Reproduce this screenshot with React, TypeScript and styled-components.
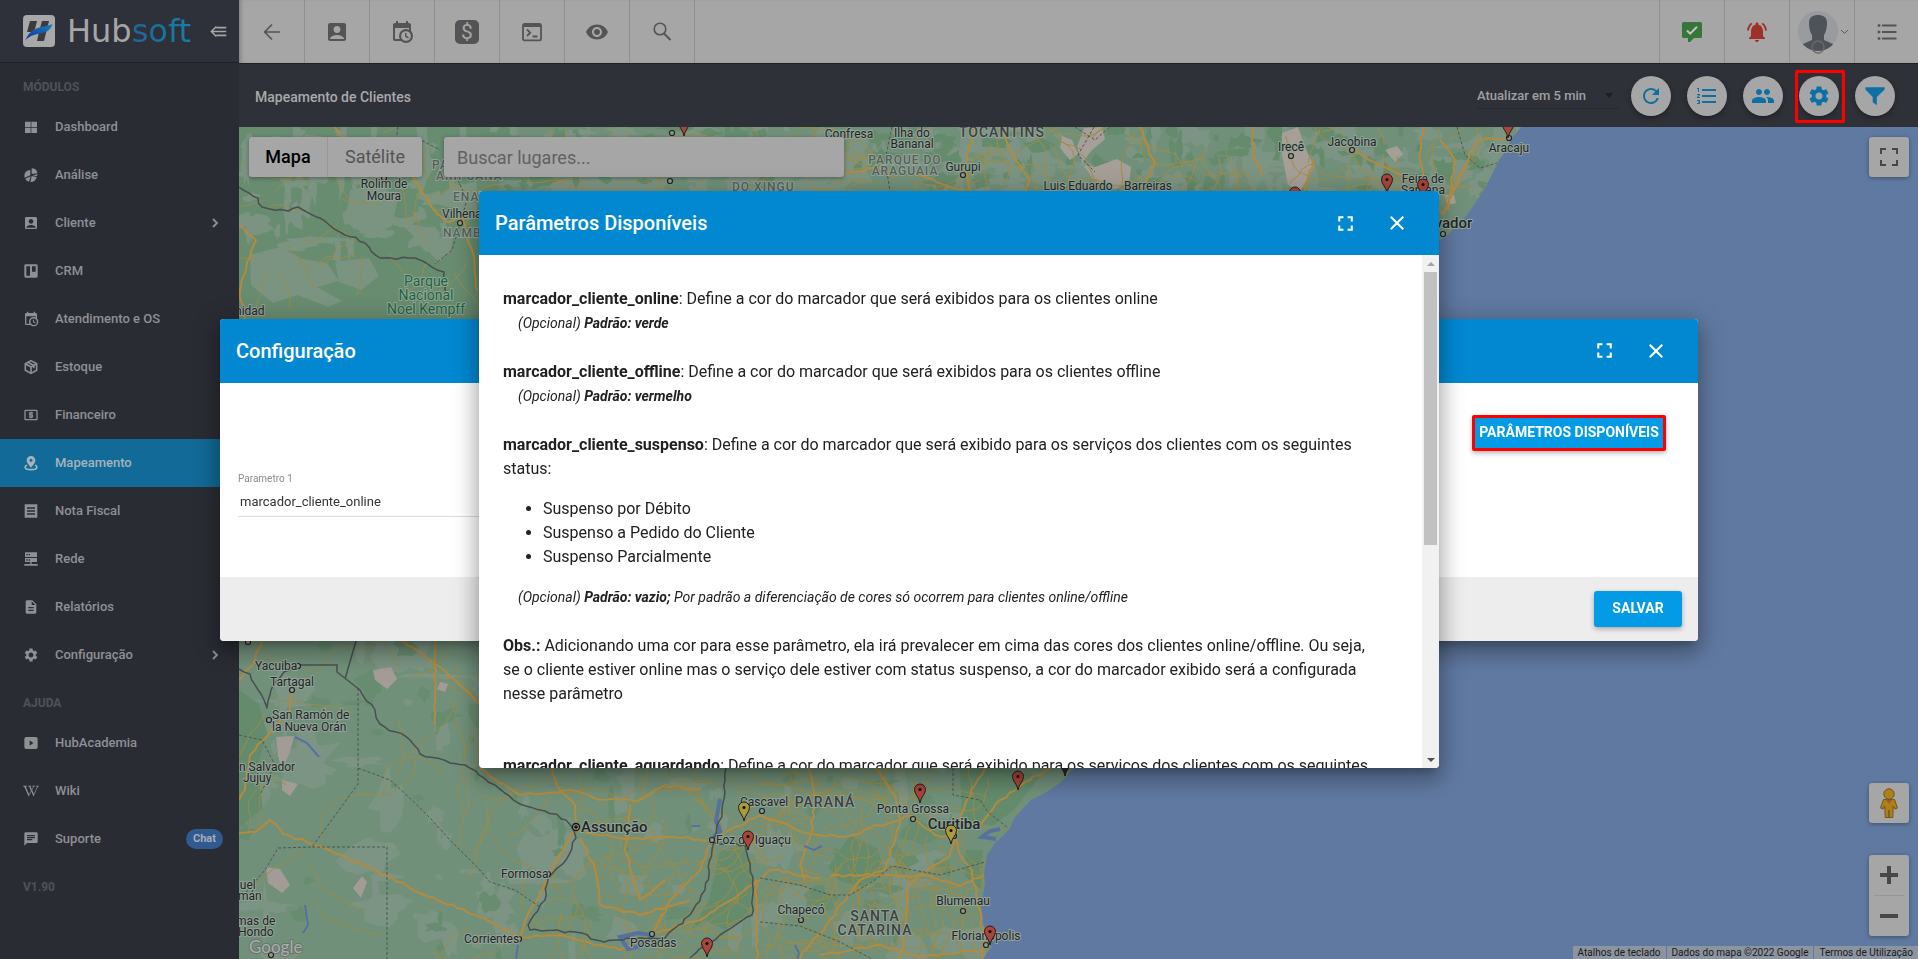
import React from "react";
import styled, { createGlobalStyle, css } from "styled-components";
import {
  MdAccountBox,
  MdChat,
  MdClose,
  MdDescription,
  MdFormatListNumbered,
  MdFullscreen,
  MdLocalAtm,
  MdNotificationsActive,
  MdPeople,
  MdRefresh,
  MdSettings,
  MdVisibility,
} from "react-icons/md";
import { FaWikipediaW } from "react-icons/fa";

const GlobalStyle = createGlobalStyle`
  * { box-sizing: border-box; }
  body { margin: 0; font-family: Roboto, "Liberation Sans", sans-serif; font-size: 13px; color: #212121; }
  button, input, select { font-family: inherit; margin: 0; }
  button { border: 0; padding: 0; cursor: pointer; }
  a { color: inherit; text-decoration: none; }
`;

/* ---------- icons ---------- */

const Svg = styled.svg<{ $size: number }>`
  width: ${(p) => p.$size}px;
  height: ${(p) => p.$size}px;
  display: block;
  flex: none;
`;

type IconProps = { size?: number };

const icon =
  (body: React.ReactNode) =>
  ({ size = 24 }: IconProps) => (
    <Svg $size={size} viewBox="0 0 24 24" fill="currentColor" aria-hidden="true">
      {body}
    </Svg>
  );

const stroke = { fill: "none", stroke: "currentColor" } as const;

const DashboardIcon = icon(<path d="M3 4h8.500v8H3zM12.500 4H21v8h-8.500zM3 13h8.500v8H3zM12.500 13H21v8h-8.500z" />);
const PieIcon = icon(
  <path d="M13 2v8.500l8.800-1.200A9 9 0 0 0 13 2zM11 4.500A8.700 8.700 0 0 0 2 13c0 1 .2 2 .6 3L11 12.300zM3.400 17.500A9 9 0 0 0 9 22l2.500-8zM13 13.500l-2 9A9.500 9.500 0 0 0 20.500 15zM14 12.300l7 1.500.8-3z" />
);
const TrelloIcon = icon(
  <path fillRule="evenodd" d="M4 2h16a2 2 0 0 1 2 2v16a2 2 0 0 1-2 2H4a2 2 0 0 1-2-2V4a2 2 0 0 1 2-2zM5 5v14h5.500V5zM13.500 5v8H19V5z" />
);
const CalendarIcon = icon(
  <path d="M15,13H16.500V15.820L18.940,17.230L18.190,18.530L15,16.690V13M19,8H5V19H9.670C9.240,18.090 9,17.070 9,16A7,7 0 0,1 16,9C17.070,9 18.090,9.240 19,9.670V8M5,21C3.890,21 3,20.100 3,19V5C3,3.890 3.890,3 5,3H6V1H8V3H16V1H18V3H19A2,2 0 0,1 21,5V11.100C22.240,12.360 23,14.090 23,16A7,7 0 0,1 16,23C14.090,23 12.360,22.240 11.100,21H5M16,11.150A4.850,4.850 0 0,0 11.150,16C11.150,18.680 13.320,20.850 16,20.850A4.850,4.850 0 0,0 20.850,16C20.850,13.320 18.680,11.150 16,11.150Z" />
);
const PackageIcon = icon(
  <g {...stroke} strokeWidth="2.400" strokeLinejoin="round">
    <path d="M12 2.500l8.500 4.700v9.600L12 21.500l-8.500-4.700V7.200z" />
    <path d="M3.500 7.200L12 12l8.500-4.800M12 12v9.500M7.500 4.800l8.700 5v4" />
  </g>
);
const PinRadiusIcon = icon(
  <g>
    <path fillRule="evenodd" d="M12 1.500a6.500 6.500 0 0 1 6.500 6.500c0 4.500-6.500 11-6.500 11S5.500 12.500 5.500 8A6.500 6.500 0 0 1 12 1.500zm0 4.200a2.300 2.300 0 1 0 0 4.600 2.300 2.300 0 0 0 0-4.600z" />
    <path {...stroke} strokeWidth="2.400" d="M6 15.500c-2 .8-2.800 1.700-2.800 2.700 0 2.200 4 3.800 8.800 3.800s8.800-1.600 8.800-3.800c0-1-.8-1.900-2.800-2.700" />
  </g>
);
const NoteIcon = icon(<path fillRule="evenodd" d="M2.500 2h19v20h-19zM6 6.500v2h12v-2zM6 11v2h12v-2zM6 15.500v2h12v-2z" />);
const ServerIcon = icon(
  <path fillRule="evenodd" d="M3 2h18v7H3zM5 4.500v2h2v-2zM8.500 4.500v2h2v-2zM3 10.500h18v6H3zM5 12.500v2h2v-2zM8.500 12.500v2h2v-2zM11 16.500h2v3h9v2.500H2v-2.500h9z" />
);
const VideoIcon = icon(
  <path fillRule="evenodd" d="M5 3h14a3 3 0 0 1 3 3v12a3 3 0 0 1-3 3H5a3 3 0 0 1-3-3V6a3 3 0 0 1 3-3zM10 8v8l5.500-4z" />
);
const ChevronIcon = icon(<path {...stroke} strokeWidth="2.800" d="M9 6l6 6-6 6" />);
const ChevronDownIcon = icon(<path {...stroke} strokeWidth="2.600" d="M3 8l9 9 9-9" />);
const BackIcon = icon(<path {...stroke} strokeWidth="1.700" d="M20 12H5M12 4.500L4.700 12l7.300 7.500" />);
const ConsoleIcon = icon(
  <g {...stroke} strokeWidth="1.800">
    <rect x="3" y="3.900" width="18" height="16.500" rx="1.500" />
    <path d="M3 5.500h18" strokeWidth="3" />
    <path d="M7 9.500l3.200 3.200L7 16M12.500 16.500h5" />
  </g>
);
const SearchIcon = icon(
  <g {...stroke} strokeWidth="1.600">
    <circle cx="10" cy="9" r="5.800" />
    <path d="M14 13.500l6.500 6.500" strokeWidth="2" />
  </g>
);
const CollapseIcon = icon(
  <g {...stroke} strokeWidth="2.200">
    <path d="M9 5l-7 7 7 7M2 12h21M9 6.500h14M9 17.500h14" />
  </g>
);
const CommentCheckIcon = icon(
  <g>
    <path d="M3.500 2h17A1.500 1.500 0 0 1 22 3.500v13a1.500 1.500 0 0 1-1.500 1.500H14l-4 4h-2v-4H3.500A1.500 1.500 0 0 1 2 16.500v-13A1.500 1.500 0 0 1 3.500 2z" />
    <path d="M7 10.500l3.200 3.200 6.800-7" fill="none" stroke="#c0c8c0" strokeWidth="2" />
  </g>
);
const ListIcon = icon(
  <g {...stroke} strokeWidth="1.800">
    <path d="M7 5.500h14.500M7 12h14.500M7 18.500h14.500" />
    <path d="M2.700 5.500h2.600M2.700 12h2.600M2.700 18.500h2.600" strokeWidth="2.400" />
  </g>
);
const FunnelIcon = icon(<path d="M1.500 2.500h21v2.300L14 13v9l-4.500-3.200V13L1.500 4.800z" />);

const DollarBadge = styled.span`
  width: 24px;
  height: 24px;
  border-radius: 5px;
  background: #545454;
  color: #a6a6a6;
  font-size: 21px;
  line-height: 24px;
  text-align: center;
`;

/* ---------- shell ---------- */

const Shell = styled.div`
  display: grid;
  grid-template-columns: 239px minmax(0, 1fr);
  min-height: 100vh;
`;

const Sidebar = styled.nav`
  display: flex;
  flex-direction: column;
  background: #2a2c34;
  color: #8f9094;
`;

const Brand = styled.div`
  height: 63px;
  display: flex;
  align-items: center;
  padding: 0 12px 0 23px;
  background: #2e3139;
  border-bottom: 1px solid #1f2127;
`;

const Wordmark = styled.span`
  flex: 1;
  margin-left: 12px;
  font-family: "DejaVu Sans", sans-serif;
  font-size: 32px;
  line-height: 40px;
  color: #a6a6a6;
`;

const WordmarkAccent = styled.span`
  color: transparent;
  background: linear-gradient(90deg, #1f6797, #157fa8);
  background-clip: text;
  -webkit-background-clip: text;
`;

const PlainButton = styled.button`
  background: none;
  color: #a6a6a6;
`;

const GroupTitle = styled.div`
  height: 40px;
  padding: 8px 23px 0;
  line-height: 32px;
  font-size: 12px;
  font-weight: 700;
  color: #505258;
`;

const NavLink = styled.a<{ $active?: boolean }>`
  display: flex;
  align-items: center;
  height: 48px;
  padding: 0 16px 0 23px;
  font-size: 13px;
  font-weight: 500;
  ${(p) => p.$active && css`background: #116a97; color: #a4b4bd;`}
`;

const NavLabel = styled.span`
  flex: 1;
  margin-left: 16px;
  padding-bottom: 2px;
`;

const ChatBadge = styled.span`
  width: 37px;
  border-radius: 10px;
  background: #305b91;
  color: #a6adb6;
  font-size: 11px;
  font-weight: 700;
  line-height: 20px;
  text-align: center;
`;

const Main = styled.div`
  display: flex;
  flex-direction: column;
  min-width: 0;
`;

const TopBar = styled.header`
  display: flex;
  height: 63px;
  padding-left: 1px;
  background: #a6a6a6;
  color: #545454;
  box-shadow: inset 4px 0 5px -3px rgba(0, 0, 0, 0.3);
`;

const TopButton = styled.button<{ $tone?: string; $side?: "left" }>`
  display: flex;
  align-items: center;
  justify-content: center;
  width: 65px;
  background: none;
  color: ${(p) => p.$tone ?? "#545454"};
  ${(p) => (p.$side === "left" ? "border-left: 1px solid #8f8f8f;" : "border-right: 1px solid #8f8f8f;")}
  &:last-child { width: 64px; }
`;

const Spacer = styled.div`
  flex: 1;
`;

const PageBar = styled.div`
  display: flex;
  align-items: center;
  height: 64px;
  padding: 0 23px 0 16px;
  background: #2f3139;
  border-top: 1px solid #202227;
`;

const PageTitle = styled.h1`
  flex: 1;
  margin: 2px 0 0;
  font-size: 14px;
  line-height: 20px;
  font-weight: 500;
  color: #a9a9ab;
`;

const IntervalField = styled.label`
  display: flex;
  align-items: center;
  width: 146px;
  margin-right: 10px;
  border-bottom: 1px solid #292b31;
  color: #1e1f24;
`;

const IntervalSelect = styled.select`
  flex: 1;
  appearance: none;
  border: 0;
  padding: 0 2px;
  height: 26px;
  background: transparent;
  color: #a0a0a2;
  font-size: 13px;
  font-weight: 500;
`;

const Caret = styled.span`
  margin-right: 8px;
  border: 4px solid transparent;
  border-top: 5px solid currentColor;
  border-bottom: 0;
`;

const RoundActions = styled.div`
  display: flex;
  gap: 16px;
`;

const RoundButton = styled.button<{ $marked?: boolean }>`
  position: relative;
  display: flex;
  align-items: center;
  justify-content: center;
  width: 40px;
  height: 40px;
  border-radius: 50%;
  background: #a6a6a6;
  color: #0d70a5;
  box-shadow: 0 2px 5px rgba(0, 0, 0, 0.35);
  ${(p) =>
    p.$marked &&
    css`
      &::after {
        content: "";
        position: absolute;
        inset: -6px -6px -7px -4px;
        border: 3px solid #ff0000;
        border-radius: 2px;
      }
    `}
`;

/* ---------- map ---------- */

const MapArea = styled.section`
  position: relative;
  flex: 1;
  min-height: 400px;
  overflow: hidden;
  background: #6079a1;
`;

const MapSvg = styled.svg`
  position: absolute;
  inset: 0;
  width: 100%;
  height: 100%;
  display: block;
  font-family: Roboto, "Liberation Sans", sans-serif;
`;

const MapTop = styled.div`
  position: absolute;
  top: 10px;
  left: 10px;
  right: 9px;
  display: flex;
`;

const mapPanel = css`
  background: #a6a6a6;
  border-radius: 3px;
  box-shadow: 0 1px 4px rgba(0, 0, 0, 0.35);
`;

const MapTypes = styled.div`
  ${mapPanel}
  display: flex;
  height: 40px;
  margin-right: 22px;
`;

const MapTypeButton = styled.button<{ $on?: boolean }>`
  background: none;
  width: ${(p) => (p.$on ? 78 : 95)}px;
  padding-bottom: 2px;
  font-size: 18px;
  font-weight: ${(p) => (p.$on ? 500 : 400)};
  color: ${(p) => (p.$on ? "#000" : "#545454")};
  & + & { border-left: 1px solid #979797; }
`;

const SearchBox = styled.input`
  ${mapPanel}
  width: 400px;
  height: 40px;
  border: 0;
  padding: 0 13px;
  font-size: 18px;
  &::placeholder { color: #616161; opacity: 1; }
`;

const MapButton = styled.button`
  ${mapPanel}
  width: 40px;
  height: 40px;
  display: flex;
  align-items: center;
  justify-content: center;
  color: #474747;
`;

const MapCorner = styled.div`
  position: absolute;
  right: 9px;
  bottom: 23px;
  display: flex;
  flex-direction: column;
  gap: 32px;
`;

const ZoomGroup = styled.div`
  ${mapPanel}
  display: flex;
  flex-direction: column;
  align-items: center;
  color: #474747;
`;

const ZoomButton = styled.button`
  display: flex;
  align-items: center;
  justify-content: center;
  width: 30px;
  height: 40px;
  background: none;
  color: inherit;
  & + & { border-top: 1px solid #979797; height: 41px; }
`;

const Attribution = styled.div`
  position: absolute;
  right: 0;
  bottom: 0;
  display: flex;
  gap: 1px;
  font-size: 10px;
  line-height: 13px;
  color: #1a1a1a;
`;

const AttributionLink = styled.a`
  padding: 0 5px;
  background: rgba(160, 160, 160, 0.7);
`;

/* Seeded generator: the terrain keeps the same texture on every load. */
const makeRandom = (seed: number) => () => {
  seed = (seed * 1664525 + 1013904223) % 4294967296;
  return seed / 4294967296;
};

const blobs = (seed: number, count: number, x0: number, y0: number, w: number, h: number, max: number) => {
  const r = makeRandom(seed);
  let d = "";
  for (let i = 0; i < count; i++) {
    const cx = x0 + r() * w;
    const cy = y0 + r() * h;
    const rx = 3 + r() * r() * max;
    const ry = 3 + r() * r() * max * 0.8;
    const pts: string[] = [];
    for (let k = 0; k < 13; k++) {
      const a = (k / 13) * Math.PI * 2;
      const s = 0.45 + r() * 0.8;
      pts.push(`${(cx + Math.cos(a) * rx * s).toFixed(1)} ${(cy + Math.sin(a) * ry * s).toFixed(1)}`);
    }
    d += `M${pts.join("L")}Z`;
  }
  return d;
};

const tracks = (seed: number, count: number, x0: number, y0: number, w: number, h: number, steps: number) => {
  const r = makeRandom(seed);
  let d = "";
  for (let i = 0; i < count; i++) {
    let x = x0 + r() * w;
    let y = y0 + r() * h;
    let a = r() * Math.PI * 2;
    d += `M${x.toFixed(1)} ${y.toFixed(1)}`;
    for (let k = 0; k < steps; k++) {
      a += (r() - 0.5) * 1.1;
      x += Math.cos(a) * 8;
      y += Math.sin(a) * 8;
      d += `L${x.toFixed(1)} ${y.toFixed(1)}`;
    }
  }
  return d;
};

const wiggle = (seed: number, points: number[][], amount: number) => {
  const r = makeRandom(seed);
  let d = `M${points[0].join(" ")}`;
  for (let i = 1; i < points.length; i++) {
    const [ax, ay] = points[i - 1];
    const [bx, by] = points[i];
    const n = Math.max(1, Math.round(Math.hypot(bx - ax, by - ay) / 6));
    for (let k = 1; k <= n; k++) {
      const j = k === n ? 0 : amount;
      d += `L${(ax + ((bx - ax) * k) / n + (r() - 0.5) * j).toFixed(1)} ${(ay + ((by - ay) * k) / n + (r() - 0.5) * j).toFixed(1)}`;
    }
  }
  return d;
};

const LAND =
  "M239 127H1521L1512 138 1506 150 1499 160 1492 174 1484 190 1474 205 1466 216 1455 227 1446 237 1439 240 1400 400 1240 660 1100 745 1074 768 1060 783 1045 793 1031 800 1015 817 1010 828 1003 836 996 842 987 855 984 873 985 883 981 907 984 927 986 940 992 947 987 953 983 959H239Z";

const FRONTIERS = [
  [[239, 187], [258, 198], [262, 207], [288, 211], [298, 207], [320, 218], [340, 232], [365, 243], [380, 258], [415, 258], [444, 272], [447, 300]],
  [[239, 669], [250, 674], [264, 700], [267, 708], [271, 690], [284, 672], [298, 665]],
  [[360, 690], [375, 710], [380, 724], [410, 740], [420, 754], [450, 763], [465, 765], [495, 785], [520, 804], [545, 811], [566, 820], [576, 838], [566, 860], [548, 878], [545, 900], [528, 925], [530, 930], [575, 932], [604, 942], [640, 938], [665, 938], [690, 915], [705, 890], [712, 850], [722, 810], [726, 768]],
  [[712, 842], [745, 845], [753, 877], [752, 915], [720, 935], [690, 958]],
];

const HIGHWAYS = [
  [[334, 127], [345, 140], [395, 150], [412, 175], [430, 205], [447, 222], [462, 218], [472, 250], [477, 290]],
  [[239, 225], [256, 240], [247, 262], [240, 290], [245, 319]],
  [[403, 641], [430, 660], [455, 680], [475, 700], [500, 715]],
  [[435, 641], [435, 725]],
  [[239, 680], [255, 660], [262, 641]],
  [[292, 690], [290, 710], [268, 735], [250, 755], [245, 790], [239, 800]],
  [[239, 833], [255, 832], [270, 820], [283, 834], [320, 846], [370, 868], [430, 897], [480, 917], [519, 938]],
  [[519, 938], [530, 910], [550, 875], [565, 845], [576, 830]],
  [[576, 830], [575, 805], [560, 790], [552, 768]],
  [[576, 830], [620, 838], [680, 838], [712, 840], [760, 815], [810, 834], [850, 836], [870, 828], [900, 820], [913, 815]],
  [[519, 938], [560, 935], [620, 950], [652, 934], [700, 920], [745, 890], [770, 870], [820, 878]],
  [[652, 934], [670, 900], [700, 870], [710, 845]],
  [[480, 768], [520, 795], [570, 790], [600, 800], [640, 800], [665, 785], [700, 790]],
  [[580, 838], [595, 870], [600, 905], [640, 915], [690, 900]],
  [[630, 805], [625, 850], [640, 900], [665, 880]],
  [[808, 768], [815, 800], [811, 834], [800, 865], [805, 880]],
  [[875, 768], [895, 795], [900, 820], [886, 868], [860, 880], [830, 920], [800, 959]],
  [[913, 819], [935, 835], [954, 837], [960, 855], [972, 870], [978, 900], [984, 940], [983, 959]],
  [[954, 837], [965, 805], [975, 785], [985, 768]],
  [[954, 837], [950, 856], [925, 872], [908, 885], [905, 930], [900, 959]],
  [[830, 876], [880, 875], [930, 876], [960, 886], [985, 875]],
  [[820, 955], [880, 945], [920, 957], [984, 950]],
  [[976, 830], [1000, 800], [1030, 780], [1050, 768]],
  [[756, 880], [757, 959]],
  [[845, 173], [880, 168], [920, 175], [965, 191]],
  [[975, 127], [965, 165], [970, 191]],
  [[1000, 127], [1010, 150], [1030, 180], [1025, 191]],
  [[1140, 127], [1155, 165], [1140, 191]],
  [[1252, 127], [1255, 160], [1262, 175]],
  [[1313, 160], [1305, 191]],
  [[1352, 150], [1380, 165], [1420, 185], [1443, 215]],
  [[1423, 127], [1420, 160], [1425, 190]],
  [[1509, 138], [1478, 140], [1465, 165], [1452, 195], [1443, 215]],
  [[1440, 140], [1455, 160], [1448, 210]],
];

const TRAILS = [
  "M398 127L396 141H423L440 150",
  "M458 180L467 200L452 250L435 264",
  "M358 688V784L312 847L278 848L265 870L239 900",
  "M312 847H387V959",
  "M358 768L390 780L412 800L430 818L450 840L480 870L490 882L515 890L540 907",
  "M953 768V795L980 800L988 812L1008 828",
  "M760 878L800 885L830 895L850 895L875 880L892 866L940 875L985 862",
  "M760 922L800 926L840 942L872 959",
  "M1075 127L1095 140L1110 127M1094 127L1078 155L1095 172",
  "M892 127L885 160L890 191",
  "M1457 127L1465 155L1480 168L1497 163",
  "M239 735L262 740L275 765L260 795",
];

type Label = [string, number, number, ("start" | "middle")?, ("city" | "capital" | "state" | "region" | "park")?];

const LABELS: Label[] = [
  ["Rolim de", 384, 188, "middle"],
  ["Moura", 384, 200, "middle"],
  ["PA", 432, 169, "start", "region"],
  ["ARIPUANA", 436, 180, "start", "region"],
  ["ENAW", 453, 201, "start", "region"],
  ["Vilhena", 442, 218, "start"],
  ["NAMBI", 443, 237, "start", "region"],
  ["Parque", 426, 286, "middle", "park"],
  ["Nacional", 426, 300, "middle", "park"],
  ["Noel Kempff", 426, 314, "middle", "park"],
  ["nidad", 235, 315, "start"],
  ["DO XINGU", 732, 191, "start", "region"],
  ["Confresa", 849, 138, "middle"],
  ["Ilha do", 912, 137, "middle"],
  ["Bananal", 912, 148, "middle"],
  ["TOCANTINS", 1002, 137, "middle", "state"],
  ["PARQUE DO", 905, 164, "middle", "region"],
  ["ARAGUAIA", 905, 175, "middle", "region"],
  ["Gurupi", 963, 171, "middle"],
  ["Luis Eduardo", 1078, 190, "middle"],
  ["Barreiras", 1148, 190, "middle"],
  ["Irecê", 1291, 151, "middle"],
  ["Jacobina", 1352, 146, "middle"],
  ["Feira de", 1423, 183, "middle"],
  ["Santana", 1423, 194, "middle"],
  ["Aracaju", 1509, 152, "middle"],
  ["Salvador", 1443, 228, "middle", "capital"],
  ["Yacuiba", 255, 670, "start"],
  ["Tartagal", 292, 686, "middle"],
  ["San Ramón de", 272, 719, "start"],
  ["la Nueva Orán", 272, 731, "start"],
  ["n Salvador", 239, 771, "start"],
  ["Jujuy", 243, 782, "start"],
  ["Assunção", 581, 832, "start", "capital"],
  ["Formosa", 501, 878, "start"],
  ["Corrientes", 464, 943, "start"],
  ["Posadas", 630, 947, "start"],
  ["Foz do Iguaçu", 716, 844, "start"],
  ["Cascavel", 740, 806, "start"],
  ["quel", 233, 889, "start"],
  ["mán", 238, 900, "start"],
  ["mas de", 236, 925, "start"],
  ["Hondo", 238, 936, "start"],
  ["PARANÁ", 825, 807, "middle", "state"],
  ["Ponta Grossa", 913, 813, "middle"],
  ["Curitiba", 954, 829, "middle", "capital"],
  ["Blumenau", 963, 905, "middle"],
  ["Chapecó", 801, 914, "middle"],
  ["SANTA", 875, 921, "middle", "state"],
  ["CATARINA", 875, 935, "middle", "state"],
  ["Florianópolis", 986, 940, "middle"],
];

const MapLabel = styled.text<{ $kind: string }>`
  paint-order: stroke;
  stroke: #93a598;
  stroke-width: 2px;
  stroke-linejoin: round;
  fill: #222426;
  font-size: 12px;
  ${(p) => p.$kind === "capital" && "font-size: 15px; font-weight: 500;"}
  ${(p) => p.$kind === "state" && "font-size: 14px; letter-spacing: 1px; font-weight: 500; fill: #3d4042;"}
  ${(p) => p.$kind === "region" && "font-size: 12px; letter-spacing: 1px; font-weight: 500; fill: #55605a;"}
  ${(p) => p.$kind === "park" && "font-size: 14px; fill: #1e6340;"}
`;

const TOWNS = [
  [460, 223], [963, 175], [1291, 156], [1352, 150], [1509, 138], [1443, 234], [298, 666], [292, 690], [269, 720],
  [548, 874], [519, 939], [652, 934], [712, 840], [762, 811], [913, 819], [954, 836], [963, 911], [801, 920],
  [986, 945], [248, 642], [271, 955], [672, 133], [670, 181], [384, 178],
];

const PINS: [number, number, string][] = [
  [920, 803, "#a8463c"], [1018, 790, "#a8463c"], [951, 844, "#a89c3c"], [990, 945, "#a8463c"],
  [744, 821, "#a89c3c"], [748, 850, "#a8463c"], [707, 957, "#a8463c"], [1387, 193, "#a8463c"],
  [1423, 198, "#a8463c"], [1295, 206, "#a8463c"], [1508, 138, "#a8463c"], [684, 136, "#a8463c"],
  [1065, 776, "#2c2c2c"],
];

const line = (pts: number[][]) => wiggle(pts[0][0] + pts[0][1], pts, 3);

const MapCanvas = () => (
  <MapSvg viewBox="239 127 1679 832" preserveAspectRatio="xMinYMin slice" role="img" aria-label="Mapa de clientes">
    <clipPath id="land">
      <path d={LAND} />
    </clipPath>
    <path d={LAND} fill="#71907a" />
    <g clipPath="url(#land)">
      <rect x="239" y="127" width="260" height="200" fill="#688c70" />
      <path d={blobs(7, 60, 239, 127, 250, 130, 42)} fill="#7b9482" />
      <path d="M250 255l30-8 22 12 25 4 12 18-22 6 25 14-14 6-30-12-25 8-22-18zM335 262l34-4 10 18-18 14-22-8zM350 190l28-6 20 14-6 28-22 12-24-16z" fill="#7b9482" />
      <path d={blobs(21, 240, 480, 127, 1050, 70, 34)} fill="#7c9483" />
      <path d={blobs(34, 130, 480, 127, 1050, 70, 20)} fill="#658b6d" />
      <path d={blobs(51, 130, 239, 641, 760, 318, 44)} fill="#7c9483" />
      <path d={blobs(66, 90, 239, 641, 760, 318, 26)} fill="#678c6f" />
      <path d="M239 690l20 14 8 30-10 34 6 40-24 20zM720 850l24-4 9 30-4 38-24 16-20-10-14 10 18-30zM850 835l28 14 6 24-22 14-22-6-12-14zM960 768l40 0 40 8-26 34-22 16-30-8zM965 850l18 0-2 40-16-14z" fill="#648b6c" />
      <path d="M373 670l18-3 6 12-10 10-12-9zM440 682l8 2-3 8-8-3zM276 737l18-1-4 16-8 18-4-14zM282 780l16 4-8 12-8-6zM266 867l14 2 10 16-8 8-14-10zM362 876l5 6-6 16-8-10z" fill="#a39b96" />
      <path d="M1084 128l18-1 3 12-14 12-10 14 14 2 22-8 14 8-2 16-14 6-20-8-12-16-6-18zM1062 136l10 4 6 14-8 6-10-12zM1282 133l16-6 8 22 8 18-14 24-12-6-6-30zM1385 150l12-4 6 8-8 8zM820 199l8-2 2 8-8 4zM1444 195l10 0 2 8-8 2z" fill="#a59f98" />
      <path d={tracks(90, 30, 239, 127, 250, 190, 5)} fill="none" stroke="#978c4c" strokeWidth="1" />
      <path d={tracks(91, 110, 480, 127, 1040, 70, 9)} fill="none" stroke="#a08c46" strokeWidth="1" />
      <path d={tracks(92, 34, 239, 641, 300, 318, 10)} fill="none" stroke="#978c4c" strokeWidth="1" />
      <path d={tracks(93, 170, 560, 768, 430, 190, 10)} fill="none" stroke="#9c8b46" strokeWidth="1" />
      {HIGHWAYS.map((pts, i) => (
        <path key={i} d={line(pts)} fill="none" stroke="#b28b3f" strokeWidth="2" strokeLinejoin="round" />
      ))}
      <path d="M295 737l12 6 12 14M305 905l3 20-5 8M518 945l-2 14M700 826l-8 0M804 846l10 4 8-4M795 945l4 8-2 8" fill="none" stroke="#56719f" strokeWidth="2" />
      <path d="M720 799l-4 22 4 10-8 8M620 937l18-4 14 2-8 10-16 4zM1000 829l-10 2-8 6 14 2" fill="none" stroke="#56719f" strokeWidth="4" />
      {TRAILS.map((d) => (
        <path key={d} d={d} fill="none" stroke="#4d5751" strokeWidth="1" strokeDasharray="3 2" />
      ))}
      {FRONTIERS.map((pts, i) => (
        <path key={i} d={wiggle(i + 3, pts, 3)} fill="none" stroke="#484f4f" strokeWidth="1.500" strokeLinejoin="round" />
      ))}
      <path d="M298 665H337V672L360 690M356 641L345 679" fill="none" stroke="#484f4f" strokeWidth="1.500" />
    </g>
    {TOWNS.map(([x, y]) => (
      <circle key={`${x}-${y}`} cx={x} cy={y} r="2.500" fill="#8f9a93" stroke="#222" strokeWidth="1.200" />
    ))}
    <circle cx="576" cy="827" r="3.500" fill="#8f9a93" stroke="#111" strokeWidth="1.300" />
    <circle cx="576" cy="827" r="1.800" fill="#111" />
    {LABELS.map(([text, x, y, anchor = "start", kind = "city"]) => (
      <MapLabel key={`${text}${x}${y}`} x={x} y={y} textAnchor={anchor} $kind={kind}>
        {text}
      </MapLabel>
    ))}
    {PINS.map(([x, y, color]) => (
      <g key={`${x}-${y}`} transform={`translate(${x} ${y})`}>
        <path d="M0 0C-.6-6-5.500-8.500-5.500-13.500A5.500 5.500 0 0 1 5.500-13.500C5.500-8.500 .6-6 0 0Z" fill={color} stroke="#2b1a18" strokeWidth="1" />
        <circle cx="0" cy="-13.500" r="1.600" fill="#1a0c0a" />
      </g>
    ))}
    <text x="249" y="953" fontFamily="Lato, sans-serif" fontSize="17" fill="#a9aeab" stroke="#69746d" strokeWidth="2" paintOrder="stroke">
      Google
    </text>
  </MapSvg>
);

const CornersIcon = ({ size = 18 }: IconProps) => (
  <Svg $size={size} viewBox="0 0 18 18" fill="currentColor" aria-hidden="true">
    <path d="M0 0h6v2H2v4H0zM12 0h6v6h-2V2h-4zM0 12h2v4h4v2H0zM16 12h2v6h-6v-2h4z" />
  </Svg>
);

const Pegman = () => (
  <Svg $size={30} viewBox="0 0 30 30" aria-hidden="true">
    <path d="M9.500 11.500h11l3 8.500-2.500 1-1.800-3-.4 11.500h-7.600L10.800 18l-1.800 3-2.500-1z" fill="#ae8017" stroke="#6e5622" strokeWidth="1" />
    <path d="M11.500 11.500h7l-3.500 4.500z" fill="#a5592a" />
    <circle cx="15" cy="6" r="5.200" fill="#ae8017" stroke="#6e5622" strokeWidth="1" />
    <path d="M15 22v7.500" stroke="#6e5622" strokeWidth="1.500" />
  </Svg>
);

/* ---------- dialogs ---------- */

const Layer = styled.div`
  position: fixed;
  inset: 0;
  display: flex;
  align-items: center;
  justify-content: center;
`;

const Dialog = styled.section<{ $width: string }>`
  display: flex;
  flex-direction: column;
  width: ${(p) => p.$width};
  max-width: 100%;
  max-height: min(577px, 90vh);
  border-radius: 4px;
  overflow: hidden;
  background: #fff;
  box-shadow: 0 7px 8px -4px rgba(0, 0, 0, 0.2), 0 13px 19px 2px rgba(0, 0, 0, 0.14), 0 5px 24px 4px rgba(0, 0, 0, 0.22);
`;

const DialogHeader = styled.header`
  flex: none;
  display: flex;
  align-items: center;
  height: 64px;
  padding: 0 16px;
  background: #0288d1;
  color: #fff;
`;

const DialogTitle = styled.h2`
  flex: 1;
  margin: 0;
  font-size: 20px;
  font-weight: 500;
`;

const DialogIconButton = styled.button`
  display: flex;
  align-items: center;
  justify-content: center;
  width: 40px;
  height: 40px;
  margin: 0 6px;
  background: none;
  color: #fff;
`;

const ConfigBody = styled.div`
  display: grid;
  grid-template-columns: minmax(0, 1fr) auto;
  column-gap: 48px;
  align-items: start;
  height: 194px;
  padding: 32px 32px 0 18px;
`;

const Field = styled.label`
  display: flex;
  flex-direction: column;
  padding-top: 56px;
  color: #8c8c8c;
  font-size: 10px;
  line-height: 16px;
`;

const FieldInput = styled.input`
  height: 30px;
  border: 0;
  border-bottom: 1px solid #dcdcdc;
  padding: 0 2px;
  background: none;
  font-size: 13px;
  color: #333;
`;

const RaisedButton = styled.button`
  height: 36px;
  width: 88px;
  padding-bottom: 2px;
  border-radius: 3px;
  background: #039be5;
  color: #fff;
  font-size: 14px;
  font-weight: 700;
  box-shadow: 0 2px 5px rgba(0, 0, 0, 0.3);
`;

const MarkedButton = styled(RaisedButton)`
  width: 194px;
  border: 3px solid #ff0000;
  border-radius: 2px;
  white-space: nowrap;
`;

const DialogFooter = styled.footer`
  display: flex;
  align-items: center;
  justify-content: flex-end;
  height: 64px;
  padding: 0 16px;
  background: #ededed;
`;

const ScrollRegion = styled.div`
  display: flex;
  flex: 1;
  min-height: 0;
`;

const Doc = styled.div`
  flex: 1;
  overflow: hidden;
  padding: 32px 44px 0 24px;
  font-size: 16px;
  line-height: 24px;
  p { margin: 0; }
  b { font-weight: 700; }
  ul { margin: 16px 0; padding-left: 40px; }
`;

const Entry = styled.div`
  margin-bottom: 24px;
`;

const Hint = styled.p`
  padding-left: 15px;
  font-size: 14px;
  line-height: 25px;
  font-style: italic;
`;

const LaterEntry = styled(Entry)`
  margin-top: 48px;
`;

const ScrollBar = styled.div`
  flex: none;
  display: flex;
  flex-direction: column;
  align-items: center;
  width: 17px;
  background: #f1f1f1;
`;

const ScrollArrow = styled.span<{ $down?: boolean }>`
  display: flex;
  align-items: center;
  justify-content: center;
  height: 17px;
  color: ${(p) => (p.$down ? "#505050" : "#a3a3a3")};
  &::after {
    content: "";
    border: 4px solid transparent;
    ${(p) => (p.$down ? "border-top-color: currentColor; border-bottom: 0;" : "border-bottom-color: currentColor; border-top: 0;")}
  }
`;

const ScrollTrack = styled.div`
  flex: 1;
`;

const ScrollThumb = styled.div`
  width: 13px;
  height: 57%;
  background: #c1c1c1;
`;

const DialogTop = ({ id, title }: { id: string; title: string }) => (
  <DialogHeader>
    <DialogTitle id={id}>{title}</DialogTitle>
    <DialogIconButton type="button" aria-label="Tela cheia">
      <MdFullscreen size={25} />
    </DialogIconButton>
    <DialogIconButton type="button" aria-label="Fechar">
      <MdClose size={24} />
    </DialogIconButton>
  </DialogHeader>
);

/* ---------- data ---------- */

type Item = { label: string; icon: React.ReactNode; active?: boolean; more?: boolean; badge?: string };

const MODULES: Item[] = [
  { label: "Dashboard", icon: <DashboardIcon size={16} /> },
  { label: "Análise", icon: <PieIcon size={16} /> },
  { label: "Cliente", icon: <MdAccountBox size={16} />, more: true },
  { label: "CRM", icon: <TrelloIcon size={16} /> },
  { label: "Atendimento e OS", icon: <CalendarIcon size={16} /> },
  { label: "Estoque", icon: <PackageIcon size={16} /> },
  { label: "Financeiro", icon: <MdLocalAtm size={16} /> },
  { label: "Mapeamento", icon: <PinRadiusIcon size={16} />, active: true },
  { label: "Nota Fiscal", icon: <NoteIcon size={16} /> },
  { label: "Rede", icon: <ServerIcon size={16} /> },
  { label: "Relatórios", icon: <MdDescription size={16} /> },
  { label: "Configuração", icon: <MdSettings size={16} />, more: true },
];

const HELP: Item[] = [
  { label: "HubAcademia", icon: <VideoIcon size={16} /> },
  { label: "Wiki", icon: <FaWikipediaW size={16} /> },
  { label: "Suporte", icon: <MdChat size={16} />, badge: "Chat" },
];

const NavItem = ({ item }: { item: Item }) => (
  <NavLink href="#" $active={item.active}>
    {item.icon}
    <NavLabel>{item.label}</NavLabel>
    {item.more && <ChevronIcon size={16} />}
    {item.badge && <ChatBadge>{item.badge}</ChatBadge>}
  </NavLink>
);

const BrandMark = () => (
  <Svg $size={32} viewBox="0 0 32 32" aria-hidden="true">
    <defs>
      <linearGradient id="swoosh" x1="0" y1="1" x2="1" y2="0">
        <stop offset="0" stopColor="#1232a0" />
        <stop offset="1" stopColor="#1683b8" />
      </linearGradient>
    </defs>
    <rect x="0" y="0" width="32" height="32" rx="4" fill="#a8a8a8" />
    <path d="M7 6h7l-2 8-3 3H4zM19 6h7l-5 20h-7l2-9z" fill="#3b3b3b" />
    <path d="M2.500 25C6 16 13 13 20 11.500c4-.8 7-1.500 9.500-2.500-1.500 5-5 8-10 9C13 19 7 20.500 2.500 25z" fill="url(#swoosh)" />
  </Svg>
);

const Avatar = () => (
  <Svg $size={44} viewBox="0 0 44 44" aria-hidden="true">
    <clipPath id="face">
      <circle cx="22" cy="21" r="20" />
    </clipPath>
    <g clipPath="url(#face)">
      <rect width="44" height="44" fill="#999b9e" />
      <path d="M13 13c0-6 4-8 9-8s9 2 9 8c0 5-1 9-3 12v5l9 4v11H7V34l9-4v-5c-2-3-3-7-3-12z" fill="#4e5259" />
    </g>
    <circle cx="22" cy="37" r="6" fill="none" stroke="#6b6b6b" strokeWidth="1.300" />
  </Svg>
);

export default function App() {
  return (
    <>
      <GlobalStyle />
      <Shell>
        <Sidebar>
          <Brand>
            <BrandMark />
            <Wordmark>
              Hub<WordmarkAccent>soft</WordmarkAccent>
            </Wordmark>
            <PlainButton type="button" aria-label="Recolher menu">
              <CollapseIcon size={17} />
            </PlainButton>
          </Brand>
          <GroupTitle>MÓDULOS</GroupTitle>
          {MODULES.map((m) => (
            <NavItem key={m.label} item={m} />
          ))}
          <GroupTitle>AJUDA</GroupTitle>
          {HELP.map((m) => (
            <NavItem key={m.label} item={m} />
          ))}
          <GroupTitle>V1.90</GroupTitle>
        </Sidebar>

        <Main>
          <TopBar>
            <TopButton type="button" aria-label="Voltar"><BackIcon /></TopButton>
            <TopButton type="button" aria-label="Cliente"><MdAccountBox size={24} /></TopButton>
            <TopButton type="button" aria-label="Agenda"><CalendarIcon /></TopButton>
            <TopButton type="button" aria-label="Financeiro"><DollarBadge>$</DollarBadge></TopButton>
            <TopButton type="button" aria-label="Console"><ConsoleIcon /></TopButton>
            <TopButton type="button" aria-label="Visualizar"><MdVisibility size={24} /></TopButton>
            <TopButton type="button" aria-label="Pesquisar"><SearchIcon /></TopButton>
            <Spacer />
            <TopButton type="button" $side="left" $tone="#37753b" aria-label="Mensagens"><CommentCheckIcon /></TopButton>
            <TopButton type="button" $side="left" $tone="#9f3029" aria-label="Notificações"><MdNotificationsActive size={24} /></TopButton>
            <TopButton type="button" $side="left" aria-label="Usuário">
              <Avatar />
              <ChevronDownIcon size={9} />
            </TopButton>
            <TopButton type="button" $side="left" aria-label="Opções"><ListIcon /></TopButton>
          </TopBar>

          <PageBar>
            <PageTitle>Mapeamento de Clientes</PageTitle>
            <IntervalField>
              <IntervalSelect aria-label="Intervalo de atualização" defaultValue="5">
                <option value="5">Atualizar em 5 min</option>
              </IntervalSelect>
              <Caret />
            </IntervalField>
            <RoundActions>
              <RoundButton type="button" aria-label="Atualizar"><MdRefresh size={24} /></RoundButton>
              <RoundButton type="button" aria-label="Lista"><MdFormatListNumbered size={24} /></RoundButton>
              <RoundButton type="button" aria-label="Clientes"><MdPeople size={24} /></RoundButton>
              <RoundButton type="button" $marked aria-label="Configuração"><MdSettings size={24} /></RoundButton>
              <RoundButton type="button" aria-label="Filtrar"><FunnelIcon size={22} /></RoundButton>
            </RoundActions>
          </PageBar>

          <MapArea>
            <MapCanvas />
            <MapTop>
              <MapTypes>
                <MapTypeButton type="button" $on>Mapa</MapTypeButton>
                <MapTypeButton type="button">Satélite</MapTypeButton>
              </MapTypes>
              <SearchBox type="text" placeholder="Buscar lugares..." aria-label="Buscar lugares" />
              <Spacer />
              <MapButton type="button" aria-label="Tela cheia"><CornersIcon /></MapButton>
            </MapTop>
            <MapCorner>
              <MapButton type="button" aria-label="Street View"><Pegman /></MapButton>
              <ZoomGroup>
                <ZoomButton type="button" aria-label="Aumentar zoom">
                  <Svg $size={18} viewBox="0 0 18 18"><path d="M0 9h18M9 0v18" stroke="currentColor" strokeWidth="4" /></Svg>
                </ZoomButton>
                <ZoomButton type="button" aria-label="Diminuir zoom">
                  <Svg $size={18} viewBox="0 0 18 18"><path d="M0 9h18" stroke="currentColor" strokeWidth="4" /></Svg>
                </ZoomButton>
              </ZoomGroup>
            </MapCorner>
            <Attribution>
              <AttributionLink href="#">Atalhos de teclado</AttributionLink>
              <AttributionLink href="#">Dados do mapa ©2022 Google</AttributionLink>
              <AttributionLink href="#">Termos de Utilização</AttributionLink>
            </Attribution>
          </MapArea>
        </Main>
      </Shell>

      <Layer>
        <Dialog role="dialog" aria-labelledby="config-title" $width="calc(100% - 440px)">
          <DialogTop id="config-title" title="Configuração" />
          <ConfigBody>
            <Field>
              Parametro 1
              <FieldInput type="text" defaultValue="marcador_cliente_online" />
            </Field>
            <MarkedButton type="button">PARÂMETROS DISPONÍVEIS</MarkedButton>
          </ConfigBody>
          <DialogFooter>
            <RaisedButton type="button">SALVAR</RaisedButton>
          </DialogFooter>
        </Dialog>
      </Layer>

      <Layer>
        <Dialog role="dialog" aria-labelledby="params-title" $width="960px">
          <DialogTop id="params-title" title="Parâmetros Disponíveis" />
          <ScrollRegion>
            <Doc>
              <Entry>
                <p><b>marcador_cliente_online</b>: Define a cor do marcador que será exibidos para os clientes online</p>
                <Hint>(Opcional) <b>Padrão: verde</b></Hint>
              </Entry>
              <Entry>
                <p><b>marcador_cliente_offline</b>: Define a cor do marcador que será exibidos para os clientes offline</p>
                <Hint>(Opcional) <b>Padrão: vermelho</b></Hint>
              </Entry>
              <Entry>
                <p><b>marcador_cliente_suspenso</b>: Define a cor do marcador que será exibido para os serviços dos clientes com os seguintes status:</p>
                <ul>
                  <li>Suspenso por Débito</li>
                  <li>Suspenso a Pedido do Cliente</li>
                  <li>Suspenso Parcialmente</li>
                </ul>
                <Hint>(Opcional) <b>Padrão: vazio;</b> Por padrão a diferenciação de cores só ocorrem para clientes online/offline</Hint>
              </Entry>
              <Entry>
                <p><b>Obs.:</b> Adicionando uma cor para esse parâmetro, ela irá prevalecer em cima das cores dos clientes online/offline. Ou seja, se o cliente estiver online mas o serviço dele estiver com status suspenso, a cor do marcador exibido será a configurada nesse parâmetro</p>
              </Entry>
              <LaterEntry>
                <p><b>marcador_cliente_aguardando</b>: Define a cor do marcador que será exibido para os serviços dos clientes com os seguintes status:</p>
              </LaterEntry>
            </Doc>
            <ScrollBar aria-hidden="true">
              <ScrollArrow />
              <ScrollTrack>
                <ScrollThumb />
              </ScrollTrack>
              <ScrollArrow $down />
            </ScrollBar>
          </ScrollRegion>
        </Dialog>
      </Layer>
    </>
  );
}
